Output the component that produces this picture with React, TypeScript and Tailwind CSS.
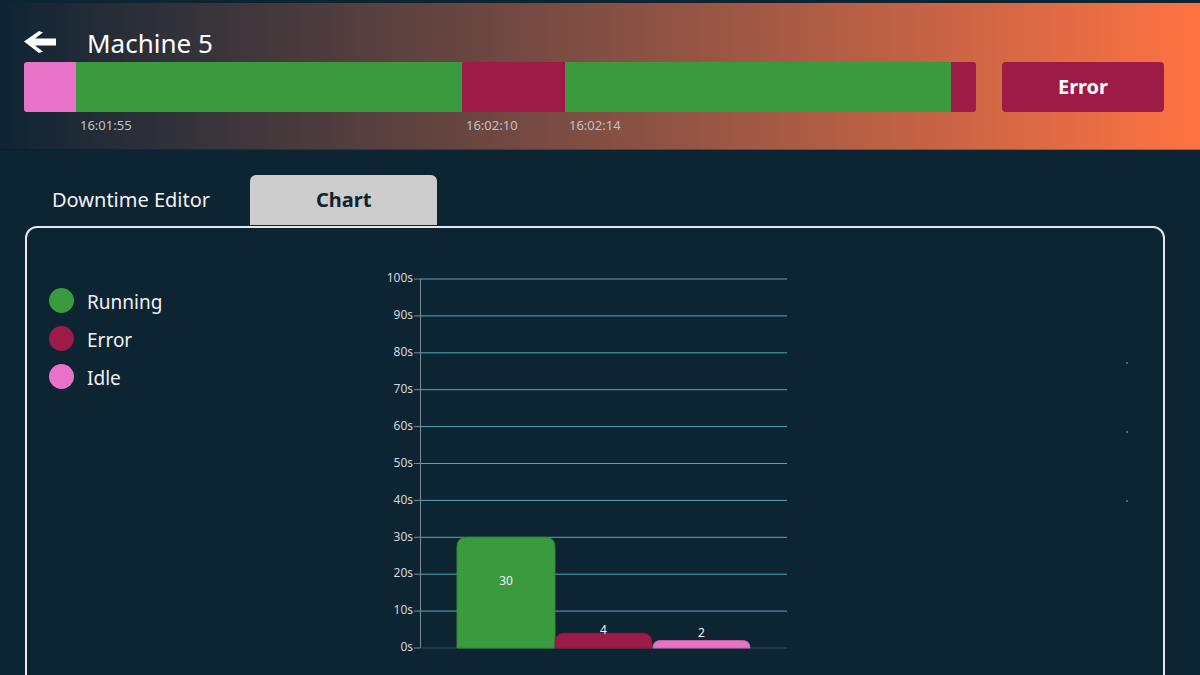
import React from 'react';

const segments = [
  { color: 'bg-[#e872c8]', width: 'w-[52px]', label: '', edge: 'rounded-l-[3px]' },
  { color: 'bg-[#3a9a3e]', width: 'w-[386px]', label: '16:01:55', edge: '' },
  { color: 'bg-[#9e1a47]', width: 'w-[103px]', label: '16:02:10', edge: '' },
  { color: 'bg-[#3a9a3e]', width: 'w-[386px]', label: '16:02:14', edge: '' },
  { color: 'bg-[#9e1a47]', width: 'w-[25px]', label: '', edge: 'rounded-r-[3px]' },
];

const legend = [
  { name: 'Running', color: 'bg-[#3a9a3e]' },
  { name: 'Error', color: 'bg-[#9e1a47]' },
  { name: 'Idle', color: 'bg-[#e872c8]' },
];

// chart scale: 0s at y=379, 100s at y=10
const yOf = (v: number) => 379 - v * 3.69;
const ticks = [0, 10, 20, 30, 40, 50, 60, 70, 80, 90, 100];

const bars = [
  { x: 77, w: 98, v: 30, labelY: 313, fill: '#3a9a3e', stroke: '#33873a' },
  { x: 175, w: 97, v: 4, labelY: 362, fill: '#9e1a47', stroke: '#8a1840' },
  { x: 273, w: 97, v: 2, labelY: 365, fill: '#e872c8', stroke: '#c964ae' },
];

const barPath = (x: number, w: number, top: number, bottom: number) => {
  const r = Math.min(10, bottom - top);
  return `M${x} ${bottom} L${x} ${top + r} Q${x} ${top} ${x + r} ${top} L${x + w - r} ${top} Q${x + w} ${top} ${x + w} ${top + r} L${x + w} ${bottom} Z`;
};

const BackArrow = () => (
  <svg width="32" height="24" viewBox="0 0 32 24" className="block">
    <path d="M0 10.5 L15 0 L19 1.5 L11 7.5 L32 7.5 L32 14.5 L11 14.5 L19 20.5 L15 22 Z" fill="#ffffff" />
  </svg>
);

const Chart = () => (
  <svg width="420" height="400" viewBox="0 0 420 400" className="mt-px block">
    {ticks.map((t) => (
      <g key={t}>
        <line x1={34} x2={40} y1={yOf(t)} y2={yOf(t)} stroke="#7d8a90" strokeWidth={1} />
        <line
          x1={40}
          x2={407}
          y1={yOf(t)}
          y2={yOf(t)}
          stroke={t === 0 ? '#34535e' : '#5aa6b6'}
          strokeWidth={1}
        />
        <text
          x={33}
          y={yOf(t)}
          textAnchor="end"
          dominantBaseline="middle"
          fontSize={12}
          fill="#d4d8da"
          fontFamily="'Noto Sans', sans-serif"
        >
          {t}s
        </text>
      </g>
    ))}
    <line x1={40.5} x2={40.5} y1={10} y2={379} stroke="#7d8a90" strokeWidth={1} />
    {bars.map((b) => (
      <g key={b.x}>
        <path d={barPath(b.x, b.w, yOf(b.v), 379)} fill={b.fill} stroke={b.stroke} strokeWidth={1} />
        <text
          x={b.x + b.w / 2}
          y={b.labelY}
          textAnchor="middle"
          dominantBaseline="middle"
          fontSize={12}
          fill="#f2f2f2"
          fontFamily="'Noto Sans', sans-serif"
        >
          {b.v}
        </text>
      </g>
    ))}
  </svg>
);

const App: React.FC = () => {
  return (
    <div className="h-[675px] overflow-hidden bg-[#0d2432] font-['Noto_Sans',sans-serif] text-white">
      <div className="h-[3px]" />
      {/* Header */}
      <header className="h-[147px] border-b border-black/25 bg-gradient-to-r from-[#0e2433] to-[#ff7341] px-6">
        <div className="flex h-[59px] items-center gap-[31px] pt-[21px]">
          <BackArrow />
          <h1 className="text-[26px] leading-8">Machine 5</h1>
        </div>
        <div className="flex gap-[26px]">
          <div className="flex">
            {segments.map((s, i) => (
              <div key={i} className={`flex flex-col ${s.width}`}>
                <div className={`h-[50px] ${s.color} ${s.edge}`} />
                <span className="mt-[5px] pl-1 text-[13px] leading-4 text-[#bfc3c6]">{s.label}</span>
              </div>
            ))}
          </div>
          <button className="h-[50px] w-[162px] rounded-[4px] bg-[#9e1a47] text-[20px] font-bold text-white">
            Error
          </button>
        </div>
      </header>

      {/* Tabs */}
      <div className="mt-[25px] flex px-[25px]">
        <div className="flex h-[50px] items-center px-[27px] text-[20px] text-[#f2f2f2]">Downtime Editor</div>
        <div className="ml-[13px] flex h-[50px] w-[187px] items-center justify-center rounded-t-[6px] bg-[#cccccc] text-[20px] font-bold text-[#0d2432]">
          Chart
        </div>
      </div>

      {/* Panel */}
      <div className="relative ml-[25px] mt-px flex h-[500px] w-[1140px] rounded-[12px] border-2 border-[#e8e8e8] px-[22px] pt-[40px]">
        <div className="mt-[20px] flex w-[331px] flex-col gap-[13px]">
          {legend.map((l) => (
            <div key={l.name} className="flex h-[25px] items-center gap-[13px]">
              <span className={`h-[25px] w-[25px] rounded-full ${l.color}`} />
              <span className="pt-[3px] text-[19px] leading-[25px] text-[#f2f2f2]">{l.name}</span>
            </div>
          ))}
        </div>
        <Chart />
        <div className="absolute left-[1099px] top-[134px] flex flex-col gap-[67px]">
          <span className="h-[2px] w-[2px] bg-[#4d6b78]" />
          <span className="h-[2px] w-[2px] bg-[#4d6b78]" />
          <span className="h-[2px] w-[2px] bg-[#4d6b78]" />
        </div>
      </div>
    </div>
  );
};

export default App;
